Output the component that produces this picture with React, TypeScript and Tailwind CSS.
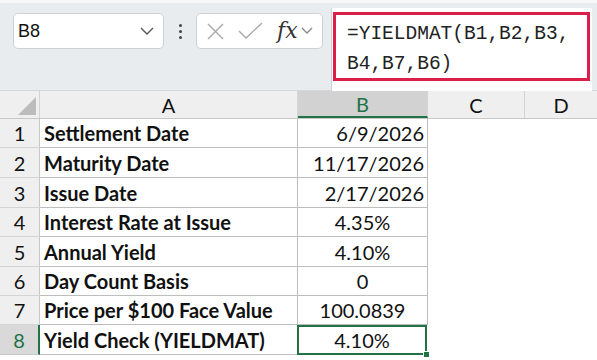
import React from 'react';

const rows: { n: number; label: string; value: string; align: 'right' | 'center'; h: string }[] = [
  { n: 1, label: 'Settlement Date', value: '6/9/2026', align: 'right', h: 'h-[29px]' },
  { n: 2, label: 'Maturity Date', value: '11/17/2026', align: 'right', h: 'h-[30px]' },
  { n: 3, label: 'Issue Date', value: '2/17/2026', align: 'right', h: 'h-[30px]' },
  { n: 4, label: 'Interest Rate at Issue', value: '4.35%', align: 'center', h: 'h-[29px]' },
  { n: 5, label: 'Annual Yield', value: '4.10%', align: 'center', h: 'h-[30px]' },
  { n: 6, label: 'Day Count Basis', value: '0', align: 'center', h: 'h-[29px]' },
  { n: 7, label: 'Price per $100 Face Value', value: '100.0839', align: 'center', h: 'h-[29px]' },
  { n: 8, label: 'Yield Check (YIELDMAT)', value: '4.10%', align: 'center', h: 'h-[30px]' },
];

const Chevron = () => (
  <svg width="14" height="8" viewBox="0 0 14 8" fill="none">
    <path d="M1 1l6 6 6-6" stroke="#555" strokeWidth="1.4" />
  </svg>
);

export default function App() {
  return (
    <div className="w-[597px] h-[360px] overflow-hidden bg-white font-['Lato','Liberation_Sans',sans-serif] text-[#111]">
      {/* toolbar */}
      <div className="h-[91px] bg-[#e9ecef] border-t-[3px] border-[#f7f7f7] border-b border-b-[#d6d6d6] flex items-start">
        <div className="ml-[13px] mt-[10px] w-[151px] h-[36px] bg-white border border-[#cfd2d5] rounded-[5px] flex items-center justify-between pl-[4px] pr-[9px]">
          <span className="text-[18px] font-['Liberation_Sans',sans-serif] leading-none">B8</span>
          <Chevron />
        </div>
        <div className="w-[32px] mt-[21px] flex flex-col items-center gap-[3px]">
          <span className="w-[3px] h-[3px] bg-[#444] rounded-full" />
          <span className="w-[3px] h-[3px] bg-[#444] rounded-full" />
          <span className="w-[3px] h-[3px] bg-[#444] rounded-full" />
        </div>
        <div className="mt-[10px] w-[127px] h-[36px] bg-white border border-[#cfd2d5] rounded-[5px] flex items-center pl-[9px] pr-[4px]">
          <svg width="19" height="19" viewBox="0 0 19 19">
            <path d="M2 2l15 15M17 2L2 17" stroke="#a8a8a8" strokeWidth="1.4" />
          </svg>
          <svg className="ml-[13px]" width="25" height="18" viewBox="0 0 25 18">
            <path d="M1 9l7 7L24 1" stroke="#a8a8a8" strokeWidth="1.4" fill="none" />
          </svg>
          <span className="ml-[14px] font-['DejaVu_Serif','Liberation_Serif',serif] italic text-[22px] leading-none text-[#333]">fx</span>
          <span className="ml-[3px] flex"><svg width="12" height="8" viewBox="0 0 12 8" fill="none"><path d="M1 1l5 5 5-5" stroke="#888" strokeWidth="1.3" /></svg></span>
        </div>
        <div className="ml-[8px] mt-[5px] w-[261px] h-[83px] bg-white border-l border-[#d0d3d6] flex items-start pl-[1px] pt-[4px]">
          <div className="w-[257px] h-[69px] border-[3px] border-[#dc1f48] pl-[11px] pt-[4px] font-['Liberation_Mono',monospace] text-[19.5px] leading-[30px] text-[#222]">
            <div>=YIELDMAT(B1,B2,B3,</div>
            <div>B4,B7,B6)</div>
          </div>
        </div>
      </div>

      {/* grid */}
      <div className="flex h-[28px] bg-[#efefef] text-[20px] border-b border-[#c8c8c8]">
        <div className="w-[40px] border-r border-[#d4d4d4] flex items-end justify-end pr-[3px] pb-[3px]">
          <svg width="18" height="18" viewBox="0 0 18 18"><path d="M18 0v18H0z" fill="#bcbcbc" /></svg>
        </div>
        <div className="w-[258px] border-r border-[#d4d4d4] flex items-center justify-center">A</div>
        <div className="w-[130px] bg-[#d2d2d2] border-r border-[#d4d4d4] border-b-2 border-b-[#217346] text-[#217346] flex items-center justify-center">B</div>
        <div className="w-[97px] border-r border-[#d4d4d4] flex items-center justify-center">C</div>
        <div className="flex-1 flex items-center justify-center">D</div>
      </div>

      {rows.map((r) => {
        const sel = r.n === 8;
        return (
          <div key={r.n} className={`flex ${r.h} text-[20px] leading-none`}>
            <div
              className={`w-[40px] flex items-center justify-center border-b ${
                sel ? 'bg-[#d9d9d9] text-[#217346] border-r-2 border-r-[#217346] border-b-[#c8c8c8]' : 'bg-[#efefef] border-r border-r-[#c8c8c8] border-b-[#d4d4d4]'
              }`}
            >
              {r.n}
            </div>
            <div className="w-[258px] border-r border-b border-[#bdbdbd] flex items-center pl-[4px] font-bold">
              {r.label}
            </div>
            <div
              className={`w-[130px] flex items-center ${r.align === 'right' ? 'justify-end pr-[3px]' : 'justify-center'} ${
                sel ? 'relative border-2 border-[#217346] -ml-px' : 'border-r border-b border-[#bdbdbd]'
              }`}
            >
              {r.value}
              {sel && <span className="absolute -right-[5px] -bottom-[5px] w-[7px] h-[7px] bg-[#217346] border border-white" />}
            </div>
          </div>
        );
      })}
    </div>
  );
}
